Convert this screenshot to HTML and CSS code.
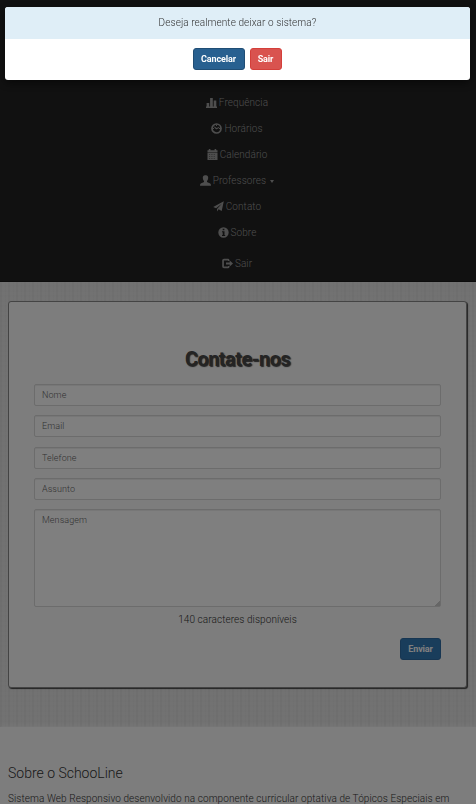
FILE: index.html
```html
<!DOCTYPE html>
<html lang="pt-BR">
<head>
<meta charset="utf-8">
<title>SchooLine</title>
<link rel="stylesheet" href="styles.css">
</head>
<body>
<nav class="navbar">
  <ul class="menu">
    <li><svg viewBox="0 0 11 11"><path d="M.6 6h2.600v4H.6zM4.100 1h2.700v9H4.100zM7.700 3.500h2.600V10H7.700zM0 9.500h11V11H0z"/></svg><span>Frequência</span></li>
    <li><svg viewBox="0 0 11 11"><circle class="ring" cx="5.500" cy="5.500" r="4.500"/><path d="M5 6.200 3 4l.6-.6 2 1.500 2.400-.8.3.7-2.600 1.400zM5 1.800h1V3H5zM1.900 5H3v1H1.900zM8 5h1.100v1H8z"/></svg><span>Horários</span></li>
    <li><svg viewBox="0 0 11 11"><path fill-rule="evenodd" d="M1.800 0h1.600v1.200h4.200V0h1.600v1.200h1.300v2H.5v-2h1.300zM.5 3.800h10V11H.5zM2.400 5.100v.6h.7v-.6zM4.600 5.100v.6h.7v-.6zM6.800 5.100v.6h.7v-.6zM2.400 7.100v.6h.7v-.6zM4.600 7.100v.6h.7v-.6zM6.800 7.100v.6h.7v-.6zM2.400 9.100v.6h.7v-.6zM4.600 9.100v.6h.7v-.6zM6.800 9.100v.6h.7v-.6z"/></svg><span>Calendário</span></li>
    <li><svg viewBox="0 0 11 11"><path d="M5.500.3C7.300 0 8.200 1.300 8.200 2.700c0 1.600-.7 2.500-1.200 3.200v1.200c1 .7 3.500 1.100 3.800 2.200l.2 1.400H0l.2-1.400C.5 8.200 3 7.800 4 7.100V5.900C3.500 5.200 2.800 4.300 2.800 2.700 2.800 1.300 3.700 0 5.500.3z"/></svg><span>Professores</span><i class="caret"></i></li>
    <li><svg viewBox="0 0 11 11"><path d="M10.800.2 8.700 9.900 5.600 8.300 4 10.600V7.900L9 2.500 3.100 7.200.2 5.900z"/></svg><span>Contato</span></li>
    <li><svg viewBox="0 0 11 11"><path fill-rule="evenodd" d="M5.500.3a5.200 5.200 0 1 1 0 10.400 5.200 5.200 0 0 1 0-10.400zM4.700 1.700v1.500h1.700V1.700zM4 4.300v.9h.7v2.900H4V9h3.200v-.9h-.7V4.300z"/></svg><span>Sobre</span></li>
    <li class="logout"><svg viewBox="0 0 11 11"><path d="M6 .7H2Q.2.700.2 2.300v6.200Q.2 10.300 2 10.300h4q1.200 0 1.400-1.100V8.100H6v.5H1.900V2.400H6v.5h1.400V2Q7.200.7 6 .7zM7.700 2.600 11 5.500 7.700 8.400V6.600H4V4.400h3.700z"/></svg><span>Sair</span></li>
  </ul>
</nav>
<main class="content">
  <form class="card">
    <h1>Contate-nos</h1>
    <input class="field" type="text" placeholder="Nome">
    <input class="field" type="text" placeholder="Email">
    <input class="field" type="text" placeholder="Telefone">
    <input class="field" type="text" placeholder="Assunto">
    <textarea class="field message" placeholder="Mensagem"></textarea>
    <p class="counter">140 caracteres disponíveis</p>
    <div class="actions"><button class="btn send" type="button">Enviar</button></div>
  </form>
</main>
<footer class="footer">
  <h2>Sobre o SchooLine</h2>
  <p>Sistema Web Responsivo desenvolvido na componente curricular optativa de Tópicos Especiais em</p>
</footer>
<div class="backdrop">
  <div class="modal" role="dialog">
    <p class="modal-title">Deseja realmente deixar o sistema?</p>
    <div class="modal-actions">
      <button class="btn cancel" type="button">Cancelar</button>
      <button class="btn leave" type="button">Sair</button>
    </div>
  </div>
</div>
</body>
</html>
```
FILE: styles.css
```css
* { box-sizing: border-box; }
html, body { height: 100%; }
body {
  margin: 0;
  overflow: hidden;
  background: #fafafa;
  color: #333;
  font: 300 10px/14px Roboto, sans-serif;
  letter-spacing: .08px;
}
h1, h2, p, ul { margin: 0; padding: 0; }
.navbar {
  height: 282px;
  padding: 90px 2px 0 0;
  background: #222;
  border-bottom: 1px solid #181818;
}
.menu { list-style: none; color: #9d9d9d; }
.menu li {
  height: 26px;
  display: flex;
  justify-content: center;
  align-items: center;
  gap: 2px;
}
.menu .logout { margin-top: 5px; }
.menu svg { width: 11px; height: 11px; margin-bottom: 1px; fill: currentColor; }
.menu .ring { fill: none; stroke: currentColor; stroke-width: 1.7; }
.caret {
  margin-left: 2px;
  border: 2.5px solid transparent;
  border-top: 3px solid currentColor;
  border-bottom: 0;
}
.content {
  height: 445px;
  padding: 19px 9px 0 8px;
  background:
    repeating-linear-gradient(90deg, rgba(0,0,0,.03) 0 2px, transparent 2px 5px, rgba(0,0,0,.015) 5px 6px, transparent 6px 8px),
    repeating-linear-gradient(0deg, rgba(0,0,0,.008) 0 2px, transparent 2px 5px),
    #e5e5e5;
}
.card {
  height: 387px;
  padding: 46px 25px 0;
  border: 1px solid #888;
  border-radius: 3px;
  background: #fafafa;
  box-shadow: 1px 1px 1px #444;
}
h1 {
  height: 36px;
  text-align: center;
  font-size: 20px;
  line-height: 23px;
  font-weight: 700;
  letter-spacing: -.55px;
  color: #484848;
  text-shadow: 1px 1px 1px #444;
}
.field {
  display: block;
  width: 100%;
  height: 22px;
  margin: 0 0 9.25px;
  padding: 3px 7px;
  border: 1px solid #d8d8d8;
  border-radius: 2px;
  background: #fff;
  box-shadow: inset 0 1px 1px rgba(0,0,0,.075);
  font: 300 9px/14px Roboto, sans-serif;
  letter-spacing: .08px;
}
.field::placeholder { color: #666; opacity: 1; }
.message { height: 98px; margin: 0; resize: vertical; }
.message::-webkit-resizer {
  background: linear-gradient(135deg, transparent 82%, #ccc 83%);
}
.counter { margin-top: 6px; text-align: center; }
.actions { display: flex; justify-content: flex-end; margin-top: 11px; }
.btn {
  height: 22px;
  padding: 0 6px;
  border: 1px solid;
  border-radius: 3px;
  color: #fff;
  font: 700 9px/18px Roboto, sans-serif;
  letter-spacing: -.1px;
}
.send { width: 41px; background: #337ab7; border-color: #2e6da4; }
.footer { padding: 37px 8px 0; white-space: nowrap; box-shadow: 0 0 4px #fafafa; }
h2 { margin-bottom: 10px; font-size: 14px; line-height: 18px; font-weight: 300; letter-spacing: 0; }
.backdrop {
  position: fixed;
  inset: 0;
  padding: 7px 6px 0 5px;
  background: rgba(0,0,0,.5);
}
.modal {
  height: 73px;
  overflow: hidden;
  border-radius: 3px;
  background: #fff;
  box-shadow: 0 3px 9px rgba(0,0,0,.5);
}
.modal-title { height: 32px; line-height: 32px; text-align: center; background: #dfeef7; }
.modal-actions { display: flex; justify-content: center; gap: 5px; padding: 9px 1px 0 0; }
.cancel { width: 52px; background: #286090; border-color: #204d74; }
.leave { width: 32px; background: #d9534f; border-color: #d43f3a; }
```
